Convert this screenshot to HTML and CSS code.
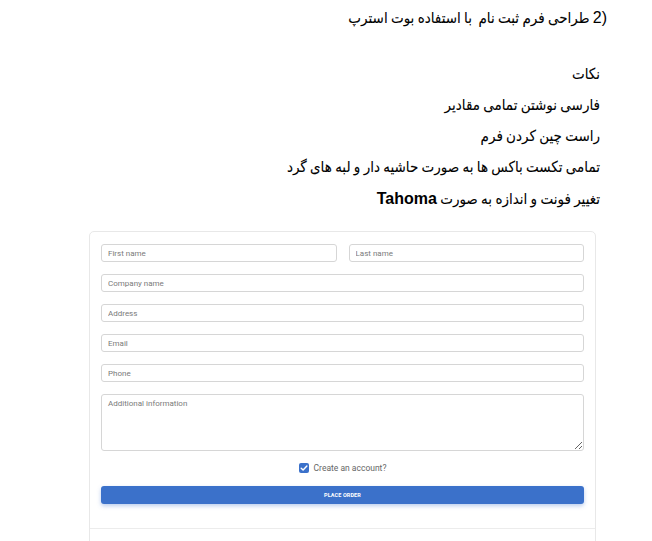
FILE: index.html
```html
<!DOCTYPE html>
<html lang="fa">
<head>
<meta charset="utf-8">
<link rel="stylesheet" href="styles.css">
</head>
<body>
<div class="doc">
  <p class="title" dir="ltr"><bdi class="fa" dir="rtl">طراحی فرم ثبت نام&nbsp; با استفاده بوت استرپ</bdi> <span class="num">2)</span></p>
  <div class="notes" dir="rtl">
    <p class="line first">نکات</p>
    <p class="line">فارسی نوشتن تمامی مقادیر</p>
    <p class="line">راست چین کردن فرم</p>
    <p class="line">تمامی تکست باکس ها به صورت حاشیه دار و لبه های گرد</p>
    <p class="line">تغییر فونت و اندازه به صورت <b class="latin">Tahoma</b></p>
  </div>
</div>
<div class="card">
  <form class="form">
    <div class="row two">
      <input class="field" type="text" placeholder="First name">
      <input class="field" type="text" placeholder="Last name">
    </div>
    <input class="field" type="text" placeholder="Company name">
    <input class="field" type="text" placeholder="Address">
    <input class="field" type="text" placeholder="Email">
    <input class="field" type="text" placeholder="Phone">
    <textarea class="field area" placeholder="Additional information"></textarea>
    <label class="check">
      <span class="box"><svg viewBox="0 0 10 10" width="10" height="10"><path d="M2.2 5.2 L4.1 7.1 L7.9 3" fill="none" stroke="#fff" stroke-width="1.4" stroke-linecap="round" stroke-linejoin="round"/></svg></span>
      <span class="check-text">Create an account?</span>
    </label>
    <button class="btn" type="button">PLACE ORDER</button>
  </form>
  <div class="footer"></div>
</div>
</body>
</html>
```
FILE: styles.css
```css
html, body {
  margin: 0;
  padding: 0;
  background: #fff;
  overflow: hidden;
}
.doc {
  width: 600px;
  font-family: "DejaVu Sans Condensed", "DejaVu Sans", sans-serif;
  font-stretch: condensed;
  font-size: 15px;
  word-spacing: -1px;
  color: #000;
  -webkit-text-stroke: 0.08px #000;
}
.latin {
  font-family: "Liberation Sans", Arial, sans-serif;
  font-size: 16px;
  font-stretch: normal;
  word-spacing: 0;
  -webkit-text-stroke: 0;
}
.title {
  margin: 0 -7px 0 0;
  padding-top: 8px;
  line-height: 20px;
  text-align: right;
}
.num {
  font-family: "Liberation Sans", Arial, sans-serif;
  font-size: 16px;
  font-stretch: normal;
  -webkit-text-stroke: 0;
}
.line {
  margin: 0;
  line-height: 31px;
}
.line.first {
  margin-top: 31px;
}
.card {
  box-sizing: border-box;
  width: 507px;
  margin-left: 89px;
  margin-top: 16px;
  border: 1px solid #e8e8e8;
  border-radius: 5px;
  height: 340px;
}
.form {
  display: flex;
  flex-direction: column;
  gap: 12px;
  padding: 12px 11px 0 11px;
}
.row.two {
  display: flex;
  gap: 12px;
}
.row.two .field {
  flex: 1;
  min-width: 0;
}
.field {
  box-sizing: border-box;
  height: 18px;
  margin: 0;
  padding: 0 6px;
  border: 1px solid #d6d6d6;
  border-radius: 3px;
  font-family: Roboto, "Liberation Sans", sans-serif;
  font-size: 8px;
  color: #444;
  background: #fff;
  outline: none;
}
.field::placeholder {
  color: #7a7a7a;
}
.area {
  height: 57px;
  padding-top: 4px;
  resize: vertical;
}
.check {
  display: flex;
  justify-content: center;
  align-items: center;
  gap: 5px;
  height: 12px;
  margin-top: -1px;
}
.box {
  width: 10px;
  height: 10px;
  border-radius: 2px;
  background: #3b71ca;
  display: flex;
}
.check-text {
  font-family: Roboto, "Liberation Sans", sans-serif;
  font-size: 8.5px;
  color: #666;
}
.btn {
  height: 18px;
  margin: 0;
  border: 0;
  border-radius: 3px;
  background: #3b71ca;
  color: #fff;
  font-family: Roboto, "Liberation Sans", sans-serif;
  font-size: 5.5px;
  font-weight: 700;
  letter-spacing: 0.1px;
  box-shadow: 0 2px 4px rgba(59, 113, 202, 0.35);
}
.footer {
  margin-top: 24px;
  border-top: 1px solid #ececec;
}
```
